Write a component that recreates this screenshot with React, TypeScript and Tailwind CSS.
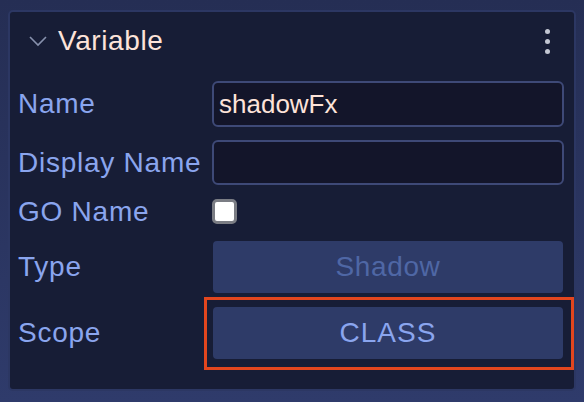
import React from 'react'

const label = "w-[194px] shrink-0 text-[28px] tracking-[0.75px] text-[#8aa5ee] leading-none"

export default function App() {
  return (
    <div className="w-[584px] h-[402px] bg-gradient-to-b from-[#252e54] to-[#2f3b6b] pt-[10px] px-[8px] font-['Liberation_Sans',Arial,sans-serif]">
      <div className="w-[568px] h-[381px] rounded-[5px] border-2 border-[#2c3763] bg-[#171d36] pl-[8px] pr-[10px] flex flex-col">
        {/* header */}
        <div className="h-[58px] flex items-center">
          <svg width="20" height="12" viewBox="0 0 20 12" className="ml-[10px]">
            <polyline points="2,2 10,10 18,2" fill="none" stroke="#8791ad" strokeWidth="1.6" />
          </svg>
          <span className="ml-[10px] text-[28px] tracking-[0.6px] text-[#fde3d9] leading-none">Variable</span>
          <div className="ml-auto mr-[14px] flex flex-col gap-[5px]">
            <span className="block w-[5px] h-[5px] rounded-full bg-[#c3c7d3]" />
            <span className="block w-[5px] h-[5px] rounded-full bg-[#c3c7d3]" />
            <span className="block w-[5px] h-[5px] rounded-full bg-[#c3c7d3]" />
          </div>
        </div>

        {/* Name */}
        <div className="mt-[11px] flex items-center h-[46px]">
          <span className={label}>Name</span>
          <div className="flex-1 h-full rounded-[6px] border-2 border-[#3e4977] bg-[#13152a] flex items-center px-[5px]">
            <span className="text-[26px] text-[#fde3d9] leading-none">shadowFx</span>
          </div>
        </div>

        {/* Display Name */}
        <div className="mt-[13px] flex items-center h-[45px]">
          <span className={label}>Display Name</span>
          <div className="flex-1 h-full rounded-[6px] border-2 border-[#3e4977] bg-[#13152a]" />
        </div>

        {/* GO Name */}
        <div className="mt-[14px] flex items-center h-[25px]">
          <span className={label}>GO Name</span>
          <div className="w-[25px] h-[25px] rounded-[5px] border-[3px] border-[#7b7d84] bg-white" />
        </div>

        {/* Type */}
        <div className="mt-[17px] flex items-center h-[52px]">
          <span className={label}>Type</span>
          <div className="flex-1 mx-[1px] h-full rounded-[4px] bg-[#2e3b68] flex items-center justify-center">
            <span className="text-[28px] tracking-[0.6px] text-[#4f67a5] leading-none">Shadow</span>
          </div>
        </div>

        {/* Scope */}
        <div className="mt-[14px] flex items-center h-[52px]">
          <span className={label}>Scope</span>
          <div className="relative flex-1 mx-[1px] h-full rounded-[4px] bg-[#2e3b68] flex items-center justify-center">
            <span className="text-[28px] tracking-[1px] text-[#8aa5ee] leading-none">CLASS</span>
            <div className="absolute -left-[9px] -right-[11px] -top-[10px] -bottom-[11px] border-[3px] border-[#e3461e]" />
          </div>
        </div>
      </div>
    </div>
  )
}
